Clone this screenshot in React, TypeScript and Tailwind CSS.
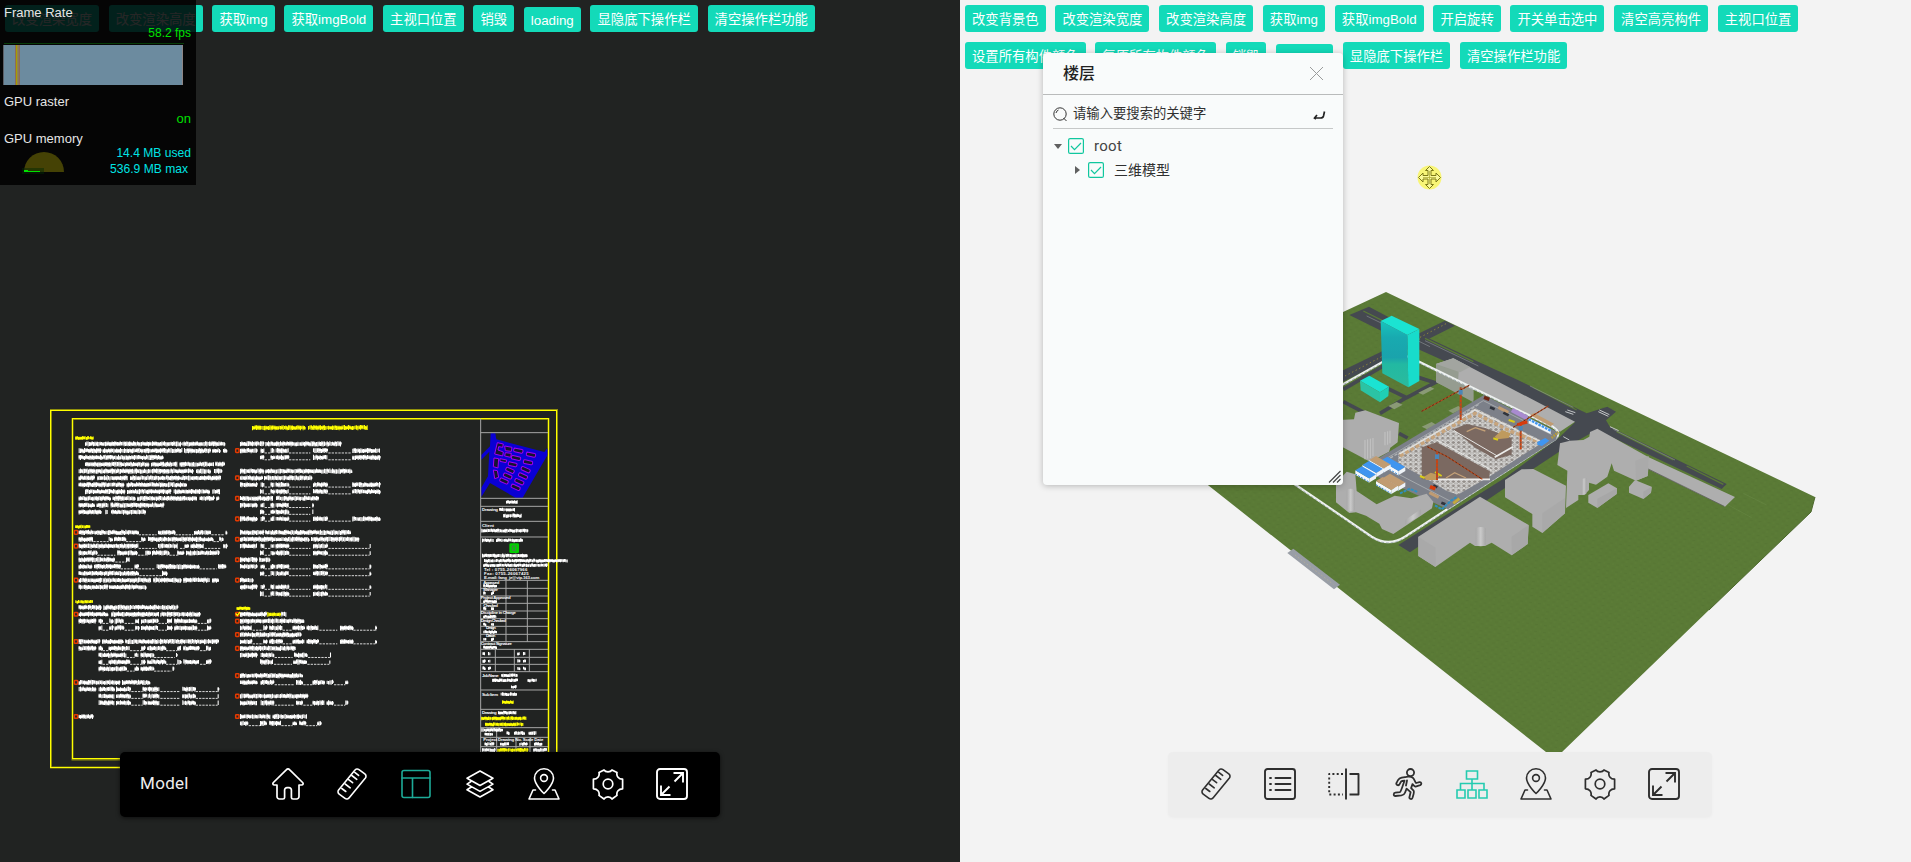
import React from 'react';

const CJK = "font-['Liberation_Sans','Noto_Sans_CJK_SC',sans-serif]";

type Item = { label: string; w: string; short?: boolean };

const leftActions: Item[] = [
  { label: '改变渲染宽度', w: 'w-[94px]' },
  { label: '改变渲染高度', w: 'w-[94px]' },
  { label: '获取img', w: 'w-[62.3px]' },
  { label: '获取imgBold', w: 'w-[89px]' },
  { label: '主视口位置', w: 'w-[80.7px]' },
  { label: '销毁', w: 'w-[40.7px]' },
  { label: 'loading', w: 'w-[57px]', short: true },
  { label: '显隐底下操作栏', w: 'w-[107.4px]' },
  { label: '清空操作栏功能', w: 'w-[107.4px]' },
];

const rightActions: Item[][] = [
  [
    { label: '改变背景色', w: 'w-[80.7px]' },
    { label: '改变渲染宽度', w: 'w-[94px]' },
    { label: '改变渲染高度', w: 'w-[94px]' },
    { label: '获取img', w: 'w-[62.3px]' },
    { label: '获取imgBold', w: 'w-[89px]' },
    { label: '开启旋转', w: 'w-[67.3px]' },
    { label: '开关单击选中', w: 'w-[94px]' },
    { label: '清空高亮构件', w: 'w-[94px]' },
    { label: '主视口位置', w: 'w-[80.7px]' },
  ],
  [
    { label: '设置所有构件颜色', w: 'w-[120.7px]' },
    { label: '复原所有构件颜色', w: 'w-[120.7px]' },
    { label: '销毁', w: 'w-[40.7px]' },
    { label: 'loading', w: 'w-[57px]', short: true },
    { label: '显隐底下操作栏', w: 'w-[107.4px]' },
    { label: '清空操作栏功能', w: 'w-[107.4px]' },
  ],
];

function ActionRow({ items }: { items: Item[] }) {
  return (
    <div className="flex h-[27px] items-end gap-[9.7px] whitespace-nowrap">
      {items.map((it) => (
        <button
          key={it.label}
          className={`${it.w} ${it.short ? 'h-[25px]' : 'h-[27px]'} flex shrink-0 items-center justify-center rounded-[3px] bg-[#13dab9] pt-[2px] text-[13.33px] leading-none text-white`}
        >
          {it.label}
        </button>
      ))}
    </div>
  );
}

/* ---------- performance overlay ---------- */

function Overlay() {
  return (
    <div className="absolute left-0 top-0 h-[185px] w-[196px] bg-black/85 font-['Liberation_Sans',sans-serif] text-[13px] leading-[15px] text-[#e6e6e6]">
      <div className="pl-1 pt-[5px]">Frame Rate</div>
      <div className="mt-[6px] pr-[5px] text-right text-[12px] leading-[14px] text-[#00e000]">58.2 fps</div>
      <svg className="mt-[2px] block" width="196" height="46" viewBox="0 42 196 46">
        <rect x="4" y="43" width="180" height="1" fill="#083d08" />
        <rect x="3" y="45" width="180" height="40" fill="#6c8b9f" />
        <rect x="3" y="45" width="1" height="40" fill="#5c5f66" />
        <rect x="182" y="45" width="1" height="40" fill="#8d8585" />
        <rect x="15" y="45" width="5" height="40" fill="#8a6b5c" />
        <rect x="16" y="45" width="1.4" height="40" fill="#a89c00" />
        <rect x="17.4" y="45" width="1" height="40" fill="#8a8a60" />
      </svg>
      <div className="mt-[6px] pl-1">GPU raster</div>
      <div className="mt-[2px] pr-[5px] text-right text-[#00e000]">on</div>
      <div className="mt-[5px] pl-1">GPU memory</div>
      <div className="flex justify-between">
        <svg className="ml-[22px] mt-[5px] block" width="42" height="24" viewBox="22 152 42 24">
          <path d="M24 173a20 20 0 0 1 40 0z" fill="#454205" />
          <rect x="22" y="169" width="22" height="6" fill="#032a03" fillOpacity=".5" />
          <path d="M24 171h4v1h12v1H24z" fill="#00e000" />
        </svg>
        <div className="-mt-px pr-[5px] text-right text-[12.1px] leading-[16px] text-[#00e4e4]">
          <div>14.4 MB used</div>
          <div className="pr-[3px]">536.9 MB max</div>
        </div>
      </div>
    </div>
  );
}

/* ---------- CAD sheet ---------- */

/* Row notation: "<row>|<x> t<width> u<width> s<width>" for lettering, blanks to fill in and gaps. */
const colA = [
  '0|135 t178 s3 t108 s3 t128',
  '1|116 t68 s4 t238 s6 t78 s7 t24 s8 t10',
  '2|116 t70 s4 t178',
  '3|135 t190 s8 t78 s8 t104 s3 t28',
  '4|116 t342 s10 t44 s10 t24',
  '5|116 t48 s8 t90 s8 t150 s4 t120',
  '6|116 t136 s8 t178',
  '7|135 t118 s8 t132 s8 t108 s8 t24',
  '8|116 t94 s8 t66 s8 t180 s7 t42 s8 t8',
  '9|116 t46 s8 t34 s8 t158',
  '10|116 t66 s14 t5 s12 t104',
  '13|116 t178 u56 s4 t50 u56 s2 t50 u42 s3 t2',
  '14|116 t42 u48 t12 s4 t34 u48 t12 s8 t194 u20 t10',
  '15|116 t178 u56 s4 t60 s4 u16 t10 s8 t40 u52 s6 t12',
  '16|116 t54 u56 s6 t60 u24 t16 s4 t50 u26 t18 s8 t100',
  '17|116 t108 u34 t12',
  '18|116 t40 s6 t78 u44 t10 u52 s4 t126 u54 s4 t22',
  '19|116 t180 u70 t16',
  '20|116 t70 s4 t142 s8 t84 s6 t78 s8 t18',
  '21|116 t88 s3 t112',
  '24|116 t66 s8 t222',
  '25|116 t88 s10 t144 s3 t118',
  '26|116 t50 s10 t10 u22 t10 s6 t28 u34 t12 s5 t50 u28 t16 s6 t68 u30 t10',
  '27|176 t10 u22 t10 s6 t28 u34 t12 s5 t50 u28 t16 s6 t68 u30 t10',
  '29|116 t64 s6 t62 s8 t278',
  '30|116 t50 s10 t10 u20 t62 u36 t12 s6 t54 u36 t12 s6 t48 u20 t16',
  '31|176 t82 u26 t10 s8 t38 u64 s4 t2',
  '32|176 t10 u20 t62 u36 t12 s6 t54 u36 t12 s6 t48 u20 t16',
  '33|176 t82 u26 t10 s8 t38 u54 s4 t2',
  '35|116 t122 s8 t82',
  '36|116 t50 s10 t46 s6 t44 u36 t12 s3 t36 u62 s6 t38 u68 t3',
  '37|176 t46 s6 t44 u36 t12 s3 t36 u62 s6 t38 u68 t3',
  '38|176 t46 s6 t44 u36 t12 s3 t36 u62 s6 t38 u68 t3',
  '40|116 t42',
];
const colB = [
  '0|30 t72 s4 t225',
  '1|30 t50 s12 t10 u20 t10 s5 t38 u66 s8 t44 u70 s4 t84',
  '2|90 t12 u20 t10 s5 t38 u66 s8 t44 u70 s4 t84',
  '4|30 t72 s4 t258',
  '5|30 t66 s6 t144',
  '6|30 t50 s12 t10 u20 t10 s5 t38 u66 s8 t44 u70 s4 t84',
  '7|90 t12 u20 t10 s5 t38 u66 s8 t44 u70 s4 t84',
  '8|30 t100 s8 t128',
  '9|30 t50 s12 t10 u20 t10 s5 t38 u66 s6 t3',
  '10|90 t12 u20 t10 s5 t38 u66 s6 t3',
  '11|30 t50 s12 t10 u20 t10 s5 t38 u66 s8 t44 u70 s4 t84',
  '13|30 t72 s4 t254',
  '14|30 t205 s8 t144',
  '15|30 t50 s12 t10 u20 t10 s5 t38 u66 s8 t44 u126 t3',
  '16|90 t12 u20 t10 s5 t38 u66 s8 t44 u126 t3',
  '17|30 t50 s8 t30',
  '18|30 t50 s12 t10 u20 t10 s5 t38 u66 s8 t44 u126 t3',
  '19|90 t12 u20 t10 s5 t38 u66 s8 t44 u126 t3',
  '20|30 t40',
  '21|30 t50 s12 t10 u20 t10 s5 t38 u66 s8 t44 u126 t3',
  '22|90 t12 u20 t10 s5 t38 u66 s8 t44 u126 t3',
  '25|30 t80 s44 t14',
  '26|30 t190',
  '27|30 t36 u34 t10 s8 t38 u32 t34 s8 t36 u56 s8 t38 u68 t3',
  '28|30 t182',
  '29|30 t36 u34 t10 s8 t38 u32 t34 s8 t36 u56 s8 t38 u68 t3',
  '30|30 t166',
  '31|30 t50 s12 t40 u56 s4 t40 u68 t3',
  '32|90 t40 u56 s4 t40 u68 t3',
  '34|30 t186',
  '35|30 t50 s12 t40 u60 s6 t20 u30 t36 s6 t20 u36 t8',
  '37|30 t204',
  '38|30 t50 s12 t40 u60 s6 t20 u30 t36 s6 t20 u36 t8',
  '40|30 t90 s8 t102',
  '41|30 t24 u36 t20 s8 t34 u36 t12 s8 t18 u36 t12',
];

const rand = (n: number) => {
  const v = Math.sin(n * 12.9898) * 43758.5453;
  return v - Math.floor(v);
};

function strokesFor(x: number, y: number, w: number, h = 16) {
  let d = '';
  let bar = '';
  for (let i = 0; i < w; i += 4) {
    const r = rand(x + i * 1.37 + y * 7);
    const top = r * h * 0.22;
    const bot = h - rand(x * 3 + i * 2.11 + y) * h * 0.2;
    d += `M${(x + i + 1.5).toFixed(1)} ${(y - h / 2 + top).toFixed(1)}V${(y - h / 2 + bot).toFixed(1)}`;
    if (rand(i * 5.3 + x + y) > 0.3) bar += `M${x + i} ${(y - 2 + r * 4).toFixed(1)}h5`;
  }
  return [d, bar];
}

function Lettering({ x, y, w, h, color = '#fff' }: { x: number; y: number; w: number; h?: number; color?: string }) {
  const [d, bar] = strokesFor(x, y, w, h);
  return (
    <g fill="none" stroke={color}>
      <path d={d} strokeWidth="3.2" />
      <path d={bar} strokeWidth="7" />
    </g>
  );
}

function Column({ rows }: { rows: string[] }) {
  let glyphs = '';
  let bars = '';
  let blanks = '';
  rows.forEach((row) => {
    const [k, rest] = row.split('|');
    const y = 131.5 + Number(k) * 20.45;
    const parts = rest.split(' ');
    let x = Number(parts[0]);
    parts.slice(1).forEach((p) => {
      const w = Number(p.slice(1));
      if (p[0] === 't') {
        const [a, b] = strokesFor(x, y, w);
        glyphs += a;
        bars += b;
      } else if (p[0] === 'u') {
        blanks += `M${x + 2} ${y + 7}h${w - 2}`;
      }
      x += w;
    });
  });
  return (
    <g fill="none" stroke="#fff">
      <path d={glyphs} strokeWidth="3.2" />
      <path d={bars} strokeWidth="7" />
      <path d={blanks} strokeWidth="3" strokeDasharray="7 3" stroke="#d8d8d8" />
    </g>
  );
}

function Markers({ x, rows }: { x: number; rows: number[] }) {
  return (
    <g fill="none" stroke="#e63a00" strokeWidth="4.5">
      {rows.map((k) => (
        <rect key={k} x={x + 1} y={126 + k * 20.45} width="10" height="11" rx="2" />
      ))}
    </g>
  );
}

const houses: [number, number, number, number][] = [
  [175, 152, 28, 11], [213, 164, 28, 11], [168, 174, 28, 11], [204, 187, 28, 11], [158, 193, 26, 11],
  [197, 209, 28, 11], [150, 211, 26, 11], [189, 228, 28, 11], [143, 228, 26, 11], [178, 245, 28, 11],
  [132, 243, 26, 11], [167, 262, 28, 11],
];

function TitleBlock() {
  return (
    <g transform="translate(460 400) scale(.33333)">
      <path d="M92 100h14l3 18 144 38 9-12v22l-74 127h-22l-76-44-26 42v-28l20-34 4-74-24 24v-14l26-26z" fill="#0a00d4" />
      <g fill="#141430" stroke="#a400f0" strokeWidth="3">
        {houses.map(([x, y, w, h]) => (
          <rect key={`${x}-${y}`} x={x - w / 2} y={y - h / 2} width={w} height={h} rx="4" transform={`rotate(${y > 200 ? 24 : 12} ${x} ${y})`} />
        ))}
        <path d="M112 128l18 4-2 10-12-2-2 10 16 6-2 12-24-6zM134 138l22 4-2 12-18-2zM136 158l18 2-2 12-18-4zM102 174l14 2-2 28-14-4zM120 176l20 4-2 8-18-4zM100 210l12 2 4 20-12 4z" />
      </g>
      <path d="M62 56V1060M62 98H264M62 295H264M62 319H264M62 364H264M62 411H264M62 541H264M62 565H264M62 588H264M62 610H264M62 633H264M62 656H264M62 679H264M62 703H264M62 725H264M62 748H264M62 772H264M62 793H264M62 815H264M62 870H264M62 928H264M62 983H264M62 1012H264M62 1040H264M138 541V725M202 541V725M106 748V815M163 748V815M208 748V815M110 983V1060M168 1012V1060M210 1012V1060" fill="none" stroke="#a8a8a8" strokeWidth="3" />
      <Lettering x={138} y={306} w={36} h={11} />
      <g fill="#fff" fontFamily="Liberation Sans, sans-serif" fontWeight="bold" fontSize="13">
        <text x="66" y="334" textLength="48">Drawing</text>
        <text x="66" y="380">Client</text>
        <text x="72" y="514" textLength="130">Tel : 0755-26067966</text>
        <text x="72" y="526" textLength="134">Fax: 0755-26067425</text>
        <text x="72" y="538" textLength="166">E-mail: fang_jz@vip.163.com</text>
        <text x="70" y="551" textLength="48">Approved</text>
        <text x="70" y="574" textLength="44">Manager</text>
        <text x="62" y="597" textLength="90">Project Approved</text>
        <text x="70" y="620" textLength="44">Checked</text>
        <text x="62" y="642" textLength="106">Discipline in Charge</text>
        <text x="62" y="665" textLength="76">Design Checked</text>
        <text x="78" y="688" textLength="30">Design</text>
        <text x="78" y="711" textLength="28">Drawn</text>
        <text x="62" y="735" textLength="94">Contract Signature</text>
        <text x="66" y="832" textLength="50">Job Name</text>
        <text x="66" y="888" textLength="48">Sub Item</text>
        <text x="66" y="943" textLength="44">Drawing</text>
        <text x="70" y="1023" textLength="180">Project Drawing No. Scale Date</text>
      </g>
      <Lettering x={118} y={329} w={48} h={11} />
      <Lettering x={130} y={347} w={56} h={13} />
      <Lettering x={64} y={392} w={140} h={12} />
      <Lettering x={66} y={421} w={34} h={11} />
      <Lettering x={108} y={421} w={80} h={11} />
      <rect x="148" y="430" width="29" height="29" rx="4" fill="#00d000" />
      <path d="M156 438h12l-2 14h-8z" fill="none" stroke="#4a7a4a" strokeWidth="3" />
      <Lettering x={66} y={467} w={136} h={12} />
      <Lettering x={72} y={482} w={252} h={11} />
      <Lettering x={70} y={496} w={190} h={10} />
      {[558, 580, 604, 626, 650, 673, 696, 718, 742].map((y, i) => (
        <g key={y}>
          <Lettering x={70} y={y} w={i % 2 ? 8 : 38} h={9} />
          {i % 2 ? <Lettering x={93} y={y} w={8} h={9} /> : null}
        </g>
      ))}
      {[761, 783, 805].map((y) => (
        <g key={y}>
          <Lettering x={68} y={y} w={8} h={11} />
          <Lettering x={84} y={y} w={8} h={11} />
          <Lettering x={172} y={y} w={8} h={11} />
          <Lettering x={189} y={y} w={8} h={11} />
        </g>
      ))}
      <Lettering x={124} y={826} w={46} h={11} />
      <Lettering x={97} y={841} w={74} h={11} />
      <Lettering x={203} y={841} w={28} h={10} />
      <Lettering x={153} y={861} w={14} h={10} />
      <Lettering x={122} y={883} w={48} h={11} />
      <Lettering x={126} y={906} w={34} h={11} color="#ff0" />
      <Lettering x={114} y={938} w={56} h={11} />
      <Lettering x={64} y={955} w={136} h={12} color="#ff0" />
      <Lettering x={75} y={973} w={114} h={12} color="#ff0" />
      <Lettering x={64} y={990} w={62} h={11} />
      <Lettering x={74} y={1003} w={22} h={9} />
      <Lettering x={140} y={999} w={8} h={12} />
      <Lettering x={162} y={999} w={32} h={12} />
      <Lettering x={206} y={999} w={24} h={12} />
      <Lettering x={74} y={1032} w={26} h={11} />
      <Lettering x={120} y={1032} w={28} h={11} />
      <Lettering x={178} y={1032} w={22} h={11} />
      <Lettering x={222} y={1032} w={24} h={11} />
      <Lettering x={66} y={1050} w={40} h={12} />
      <Lettering x={112} y={1050} w={90} h={12} color="#ff0" />
      <Lettering x={220} y={1050} w={40} h={12} />
    </g>
  );
}

function CadSheet() {
  return (
    <svg className="absolute inset-0" width="960" height="862" viewBox="0 0 960 862">
      <rect x="51" y="410" width="506" height="357.5" fill="none" stroke="#8f8f0c" strokeWidth="2" />
      <rect x="72.5" y="419" width="476" height="340.5" fill="none" stroke="#8f8f0c" strokeWidth="2" />
      <rect x="50.5" y="410.5" width="506" height="357" fill="none" stroke="#ff0" />
      <rect x="72.5" y="418.5" width="476" height="340" fill="none" stroke="#ff0" />
      <g transform="translate(40 400) scale(.33333)">
        <Column rows={colA} />
        <Markers x={102} rows={[13, 15, 20, 25, 29, 35, 40]} />
        <Lettering x={106} y={114} w={56} h={11} color="#ff0" />
        <Lettering x={106} y={380} w={42} h={11} color="#ff0" />
        <Lettering x={106} y={605} w={52} h={11} color="#ff0" />
      </g>
      <g transform="translate(230 400) scale(.33333)">
        <Column rows={colB} />
        <Markers x={16} rows={[1, 5, 8, 11, 14, 17, 20, 25, 26, 28, 30, 34, 37, 40]} />
        <Lettering x={66} y={83} w={160} h={16} color="#ff0" />
        <Lettering x={234} y={83} w={180} h={16} color="#ff0" />
        <Lettering x={20} y={625} w={38} h={11} color="#ff0" />
        <Lettering x={112} y={643} w={40} h={14} color="#ff0" />
        <path d="M17 640l5 6 8-10" fill="none" stroke="#ff0" strokeWidth="4" />
      </g>
      <TitleBlock />
    </svg>
  );
}

/* ---------- 3D site model ---------- */

function Crane({ x, top, base, jib }: { x: number; top: number; base: number; jib: string }) {
  return (
    <g fill="none">
      <path d={`M${x} ${top}V${base}`} stroke="#cf430f" strokeWidth="6" />
      <path d={`M${x} ${top}V${base}`} stroke="#7d5a4a" strokeWidth="3" strokeDasharray="5 6" />
      <path d={jib} stroke="#b8481c" strokeWidth="3.6" />
      <path d={jib} stroke="#5e2c18" strokeWidth="3" strokeDasharray="6 6" />
      <rect x={x - 6} y={top + 8} width="12" height="14" fill="#4a86b8" />
    </g>
  );
}

function Shed({ x, y, l, top = '#3f95f0' }: { x: number; y: number; l: number; top?: string }) {
  const h = l * 0.58;
  return (
    <g>
      <path d={`M${x} ${y}l${l} ${h}v13l-${l}-${h}z`} fill="#f4f8fc" />
      <path d={`M${x} ${y + 11}l${l} ${h}`} stroke="#2a7fd0" strokeWidth="3" strokeDasharray="6 4" />
      <path d={`M${x} ${y}l20-12 ${l} ${h}-20 12z`} fill={top} />
      <path d={`M${x + l} ${y + h}l20-12v12l-20 12z`} fill="#eef3f8" />
    </g>
  );
}

function SiteModel() {
  return (
    <svg className="absolute inset-0" width="951" height="862" viewBox="960 0 951 862">
      <defs>
        <pattern id="grass" width="9" height="7" patternUnits="userSpaceOnUse" patternTransform="rotate(8)">
          <rect width="9" height="7" fill="#5a7a36" />
          <path d="M1 2h3M5 5.500h3" stroke="#577634" strokeWidth="1" />
          <path d="M5 1h2M1 5h2" stroke="#5d7d38" strokeWidth="1" />
        </pattern>
        <pattern id="truss" width="16" height="13" patternUnits="userSpaceOnUse">
          <rect width="16" height="13" fill="#938e8a" />
          <path d="M0 0l16 13M16 0L0 13M0 0h16M8 0v13" stroke="#dcdcda" strokeWidth="2.600" />
        </pattern>
        <linearGradient id="glass" x1="0" y1="0" x2="0" y2="1">
          <stop offset="0" stopColor="#18c4bc" />
          <stop offset=".25" stopColor="#18aab0" />
          <stop offset=".55" stopColor="#1aa3ac" />
          <stop offset=".65" stopColor="#22b9a2" />
          <stop offset="1" stopColor="#2bbb9d" />
        </linearGradient>
        <linearGradient id="tube" x1="0" x2="1">
          <stop offset="0" stopColor="#a8a8a8" />
          <stop offset=".5" stopColor="#cacaca" />
          <stop offset="1" stopColor="#a6a6a6" />
        </linearGradient>
      </defs>
      <path d="M1386 292L1815 497l-4 15-102 98-147 142-8 7-8-7L1180 463v-75z" fill="url(#grass)" />
      <path d="M1815 497l-4 15-102 98" fill="none" stroke="#4c682d" />

      <g transform="translate(1320 280) scale(.33333)">
        {/* roads */}
        <g fill="#454950">
          <path d="M88 105l59-25L320 172 470 243 600 303 800 400l62-20 26 15-30 26 12 20L1220 612l-15 15L830 450 740 500 620 580 270 817l-35-22L560 590 720 470 765 427 600 345 300 210z" />
          <path d="M60 275L375 122l30 15L60 310z" />
        </g>
        <g fill="none" stroke="#454950" strokeWidth="11">
          <path d="M70 328l120-70 155 50-85 45-135-65M70 365l80 42M260 352l-80 48M237 460l26 14" />
        </g>
        <g fill="none" stroke="#5a7a36" strokeWidth="4">
          <path d="M130 93l170 85M315 175l145 70M640 322l130 68M890 455l170 85M1100 558l110 55" />
        </g>
        <g fill="none" stroke="#9ea3a6" strokeWidth="1.500">
          <path d="M140 108l190 92M315 182l160 76M630 318l130 64M880 448l185 92" />
          <path d="M736 395l24 8M742 390l24 8M835 395l30 14M838 390l30 14M730 470l18 10M870 440l26 12" stroke="#c4c7c9" strokeWidth="3" />
        </g>
        <path d="M75 288L250 196M300 172l80-42" stroke="#b5a82c" strokeWidth="2" strokeDasharray="4 8" />

        {/* slab along the main road */}
        <path d="M348 252l52-17 365 190-45 30-100-54-160-72v32L348 306z" fill="#aeaeae" />
        <path d="M348 252l52-17 18 12-4 60 46 24v36L348 306z" fill="#959c90" />
        <path d="M348 252l52-17 50 26-30 16z" fill="#a2a5a0" />
        <path d="M205 378l25-12 18 8-25 14zM295 338l36-18 12 6-34 18zM305 440l30-14 14 8-28 14zM385 392l30-14 14 8-30 14z" fill="#8a9a76" />

        {/* background buildings */}
        <path d="M60 420l42-2 4-20 30-7 101 38-4 58-22 16-4 12-57 30-90-48z" fill="#adadad" />
        <path d="M135 480v58M143 478v58M151 476v58M159 474v54M195 456v40M203 454v40M210 452v38" stroke="#c4c4c4" strokeWidth="3" />

        {/* perimeter wall */}
        <path d="M60 318L205 236q42-20 85 6L690 436q40 20 15 42L255 770q-50 32-100 0L-100 596" fill="none" stroke="#eef1f0" strokeWidth="7" />
        <path d="M60 320L205 239q42-20 85 6L690 439q40 20 15 42L255 773q-50 32-100 0L-100 599" fill="none" stroke="#7f8f96" strokeWidth="2" strokeDasharray="8 6" />

        {/* construction site */}
        <path d="M150 550L492 345l222 112-6 22L384 688 140 575z" fill="#7c8089" />
        <path d="M205 532L490 362l205 102M240 585l150 78" fill="none" stroke="#a5a9ad" strokeWidth="3" />
        <path d="M185 550L478 372" stroke="#b0b3b6" strokeWidth="4" strokeDasharray="10 5" />
        <path d="M235 520l230-136 196 96-4 14-152 98-92 52-34-12-60-36-84-46z" fill="url(#truss)" />
        <path d="M240 528L465 400l110 55 80 30" fill="none" stroke="#c7a47c" strokeWidth="10" strokeDasharray="12 6" />
        <path d="M240 521L465 390l195 94" fill="none" stroke="#e0e0dd" strokeWidth="4" />
        <path d="M400 448l40-16 55 12 80 30v50l-48 14-60-34z" fill="#7b6961" />
        <path d="M305 502l45-15 160 87-3 24H305z" fill="#7b6961" />
        <path d="M350 480l165 90M402 452l130 76" fill="none" stroke="#e6e6e4" strokeWidth="3" />
        <path d="M524 532l55-32M340 598h170" stroke="#ececea" strokeWidth="5" />
        <path d="M378 594l26-16 34 16M440 455l26-12 30 10" fill="none" stroke="#c3a077" strokeWidth="4" />
        <path d="M312 590l20-12 28 8-12 14h-30zM524 470l22-20 26 10-6 14-34 4z" fill="#bf9a5d" />
        <path d="M300 588l14 6M345 576l20 12M566 420l18 6M520 475l14 4" stroke="#d8cc18" strokeWidth="6" />
        <path d="M535 382l30 15M328 638l28 14" stroke="#c09b72" strokeWidth="9" />
        <path d="M510 382l14 6M550 398l16 8M340 616l12 6M364 668l12 5" stroke="#30343c" strokeWidth="8" />
        <path d="M492 352l16 6M205 545l16 6" stroke="#6e2614" strokeWidth="10" />
        <path d="M330 620l16 6" stroke="#d63c0c" strokeWidth="11" />
        <path d="M576 390l46 24" stroke="#a98bd0" strokeWidth="14" />

        {/* sheds */}
        <path d="M626 414l66 34v14l-66-32z" fill="#f2f6fa" />
        <path d="M626 418l66 34" stroke="#3f95f0" strokeWidth="7" strokeDasharray="8 3" />
        <path d="M630 405l12-6 60 32-10 8z" fill="#c19c72" />
        <path d="M652 486l24-12 12 8-22 16-14-4z" fill="#3f95f0" />
        <path d="M695 474l20-18" stroke="#b59b3a" strokeWidth="8" strokeDasharray="5 3" />
        <Shed x={182} y={542} l={54} />
        <Shed x={148} y={540} l={44} top="#c19c72" />
        <Shed x={127} y={555} l={42} />
        <Shed x={106} y={571} l={42} />
        <Shed x={190} y={593} l={46} top="#c19c72" />
        <Shed x={168} y={603} l={46} top="#c19c72" />
        <path d="M240 640l30-14 22 10M345 676l20 12 28-26 18-12" fill="none" stroke="#2f8fc0" strokeWidth="6" strokeDasharray="9 3" />
        <path d="M400 670l18-14" stroke="#c4a83c" strokeWidth="8" />

        <Crane x={422} top={322} base={420} jib="M305 394L448 316" />
        <Crane x={351} top={515} base={600} jib="M322 500l60 30 105 68" />
        <Crane x={602} top={430} base={508} jib="M580 442l105-64" />
        <path d="M592 434l30-8" stroke="#d83a0c" strokeWidth="9" />

        {/* highlighted buildings */}
        <path d="M182 123l80 42 3 157-78-42z" fill="url(#glass)" />
        <path d="M182 123l33-16 83 40-36 18z" fill="#1be3d2" />
        <path d="M262 165l36-18v156l-33 19z" fill="#18dccb" />
        <path d="M120 302l28-15 59 33-27 17z" fill="#1be3d2" />
        <path d="M120 302l60 35v30l-58-36z" fill="#2bc3a4" />
        <path d="M180 337l27-17-2 28-25 19z" fill="#1fcfb6" />
      </g>

      <g transform="translate(1180 440) scale(.33333)" fill="#aeaeae">
        <path d="M468 130l32-35 26 8 4 50 60 40 54-26 50 8 46-14 20 24-4 20-30 20-86 57-34-15-8-16-40-24-30-10-20 2-40-32z" />
        <path d="M500 150q12-8 24 0v60q-12 8-24 2z" fill="url(#tube)" />
        <path d="M676 240l46-32v18l-46 28z" fill="url(#tube)" />
        <path d="M715 290l185-120 146 85-3 57-48 34-60-38-20 10h-30l-15-10-104 73-51-33z" />
        <path d="M715 290l52 33v58l-52-33z" fill="#a9a9a9" />
        <path d="M995 290l51-35-3 57-48 34z" fill="#a8a8a8" />
        <path d="M887 264q15-6 30 0v52q-15 6-30 0z" fill="url(#tube)" />
        <path d="M322 339l18-13 140 108-18 14z" fill="#999ea6" />
        <path d="M345 345l115 88" stroke="#c9b98c" strokeWidth="1.500" strokeDasharray="5 6" />
      </g>

      <g transform="translate(1520 350) scale(.33333)" fill="#aeaeae">
        <path d="M-45 390l50-32 35-1 98 50-3 83-68 59-30-19v-38l-82-50z" />
        <path d="M67 490l68-46v46l-68 59z" fill="#a9a9a9" />
        <path d="M112 345l8-65 30-8 40-2 18-10 2-14 22-10 154 86 259 119-30 29-230-112-2 20-35 14-66-30-7-22-13 40-34 24-21-6v22l-14 15h-18v15l-37 24 4-112z" />
        <path d="M385 357l228 112" stroke="#555" strokeWidth="2" />
        <path d="M348 392l-2-60 40-14-3 60z" fill="#aaa" />
        <path d="M187 386l12-2v48l-14 3z" fill="url(#tube)" />
        <path d="M205 435l60-35 26 15-1 17-58 42-27-16z" />
        <path d="M327 410l18-20 50 20-2 18-23 19-43-19z" />
        <path d="M232 446l59-31-1 17-58 42zM370 425l25-15-2 18-23 19z" fill="#a7a7a7" />
        <path d="M670 430l70 35M625 465l70 38" stroke="#6a8a46" strokeWidth="1.500" />
      </g>
    </svg>
  );
}

/* ---------- toolbar icons ---------- */

function Icon({ children, color, sw = 2 }: { children: React.ReactNode; color: string; sw?: number }) {
  return (
    <svg width="32" height="32" viewBox="0 0 32 32" fill="none" stroke={color} strokeWidth={sw} strokeLinecap="round" strokeLinejoin="round" className="shrink-0">
      {children}
    </svg>
  );
}

const homePath = <path d="M14.5 1.6a2 2 0 0 1 3 0L30.6 14.5c1 1 .5 2.5-1 2.5H27v11.5a2.4 2.4 0 0 1-2.4 2.5H21a1.6 1.6 0 0 1-1.6-1.6V22a2.4 2.4 0 0 0-2.4-2.4h-2a2.4 2.4 0 0 0-2.4 2.4v7.4A1.6 1.6 0 0 1 11 31H7.4A2.4 2.4 0 0 1 5 28.5V17H2.4c-1.500 0-2-1.500-1-2.500z" />;
const rulerPath = (
  <>
    <path d="M18.800 2.200a3 3 0 0 1 4.200-.6l5.800 4.300a3 3 0 0 1 .6 4.200L13.200 29.800a3 3 0 0 1-4.200.6l-5.800-4.300a3 3 0 0 1-.6-4.200z" />
    <path d="M5.800 20.500l4 3M9.200 16l5 3.800M12.600 11.700l4 3M15.800 7.500l5 3.800M18.800 4.400l3.800 3" />
  </>
);
const layoutPath = (
  <>
    <rect x="2" y="2.500" width="28" height="27" rx="2" />
    <path d="M2 10h28M12.500 10v19.500" />
  </>
);
const layersPath = (
  <>
    <path d="M16 3l13 7.200-13 7.300-13-7.300z" />
    <path d="M7 13.500l-4 2.600 13 7.300 13-7.300-4-2.600M7 19.300L3 21.800 16 29l13-7.200-4-2.500" />
  </>
);
const pinPath = (
  <>
    <path d="M16 25.500S6.500 16.500 6.500 10a9.500 9.200 0 0 1 19 0C25.500 16.500 16 25.500 16 25.500z" />
    <circle cx="16" cy="10" r="3.400" />
    <path d="M7.500 22H5L1 31h30l-4-9h-2.500" />
  </>
);
const gearPath = (
  <>
    <path d="M12 2c1.600 2.400 6.400 2.400 8 0l5 2.600c-.8 3.200 1.600 6.800 5.600 6.600v9.600c-4-.2-6.400 3.400-5.600 6.600L20 31c-1.600-2.800-6.400-2.800-8 0l-5-3.600c.8-3.200-1.600-6.800-5.600-6.600v-9.600C5.400 11.400 7.800 7.800 7 4.600z" />
    <circle cx="16" cy="16" r="4.800" />
  </>
);
const expandPath = (
  <>
    <rect x="1" y="1" width="30" height="30" rx="3" />
    <path d="M18.500 13.500L27 5M17.500 5H27v9.500M13.500 18.500L5 27M5 17.500V27h9.500" strokeLinecap="butt" strokeLinejoin="miter" />
  </>
);
const listPath = (
  <>
    <rect x="1" y="1" width="30" height="30" rx="2.500" />
    <path d="M11.500 10h15M11.500 16h15M11.500 22h15" />
    <path d="M6 10h1M6 16h1M6 22h1" />
  </>
);
const splitPath = (
  <>
    <path d="M18 .5v31" strokeLinecap="butt" />
    <path d="M21.500 6H30.500v20.500H21.500" strokeLinecap="butt" />
    <path d="M15 6H1.200v20.500H15" strokeDasharray="2 2.300" strokeLinecap="butt" />
  </>
);
const runPath = (
  <>
    <circle cx="18.500" cy="4.600" r="3.600" />
    <path d="M13 9.200c2-1 6-.7 7.800.5 1.600 1.200 2 4 3.400 5.300l3.300-.9c2-.4 2.400 2.300.8 3l-4.800 1.500c-1.200 0-2.300-1.500-3-2.500l-1.400 4 2.500 2.600c1 1.500-.5 5-1.200 7.300-.6 1.700-3.400 1.200-3-.8l1.200-5-4-3.600-1.600 4.200c-.7 1.800-2 2.400-3.600 2.600l-6 .6c-2.200 0-2.200-3 0-3.300l4.600-.6c1-.6 3.500-8.600 4.500-11.500-1.700 0-2.600 0-3.200.7l-2 3.300c-1.300 1.500-3.600 0-2.800-1.600C6.200 10.500 8 9.500 13 9.200zM15 12.500l-1 5" />
  </>
);
const treePath = (
  <path d="M10.500 3h11v8h-11zM1 22h8v8H1zM12 22h8v8h-8zM23 22h8v8h-8zM16 11v11M4.500 22v-6.500h23.500V22" strokeLinecap="butt" strokeLinejoin="miter" />
);

function LeftToolbar() {
  return (
    <div className="absolute left-[120px] top-[752px] flex h-[65px] w-[600px] items-center rounded-[5px] bg-black pb-[2px] pl-5 shadow-[0_1px_4px_rgba(0,0,0,0.6)]">
      <div className="w-[132px] font-['Roboto',sans-serif] text-[17px] tracking-[0.3px] text-[#eee]">Model</div>
      <div className="flex gap-8">
        <Icon color="#fff" sw={1.7}>{homePath}</Icon>
        <Icon color="#fff" sw={1.6}>{rulerPath}</Icon>
        <Icon color="#1dab98" sw={1.6}>{layoutPath}</Icon>
        <Icon color="#fff" sw={1.6}>{layersPath}</Icon>
        <Icon color="#fff" sw={1.6}>{pinPath}</Icon>
        <Icon color="#fff" sw={1.700}>{gearPath}</Icon>
        <Icon color="#fff" sw={1.900}>{expandPath}</Icon>
      </div>
    </div>
  );
}

function RightToolbar() {
  return (
    <div className="absolute left-[208px] top-[752px] flex h-[65px] w-[544px] items-center justify-center gap-8 rounded-[5px] bg-[#ededed] pb-[2px] shadow-[0_1px_3px_rgba(0,0,0,0.03)]">
      <Icon color="#2e2e2e" sw={1.6}>{rulerPath}</Icon>
      <Icon color="#2e2e2e" sw={1.900}>{listPath}</Icon>
      <Icon color="#2e2e2e" sw={1.900}>{splitPath}</Icon>
      <Icon color="#2e2e2e" sw={1.800}>{runPath}</Icon>
      <Icon color="#25cbb0" sw={1.6}>{treePath}</Icon>
      <Icon color="#2e2e2e" sw={1.6}>{pinPath}</Icon>
      <Icon color="#2e2e2e" sw={1.700}>{gearPath}</Icon>
      <Icon color="#2e2e2e" sw={1.900}>{expandPath}</Icon>
    </div>
  );
}

/* ---------- floor dialog ---------- */

function Checkbox() {
  return (
    <svg width="16" height="16" viewBox="0 0 16 16" fill="none" stroke="#10c79e" strokeWidth="1.200" className="shrink-0">
      <rect x=".6" y=".6" width="14.800" height="14.800" rx="1.500" />
      <path d="M3 8l3.500 3.600L13 5" />
    </svg>
  );
}

function FloorDialog() {
  return (
    <div className="absolute left-[83px] top-[53px] h-[432px] w-[300px] rounded-[4px] bg-[#f9fbfb] text-[#303030] shadow-[0_1px_6px_rgba(0,0,0,0.25)]">
      <div className="flex h-[42px] items-center justify-between border-b border-[#b9bbbb] pl-5 pr-[19px] text-[16px] font-medium text-[#222]">
        <span className="pt-px">楼层</span>
        <svg width="15" height="15" viewBox="0 0 15 15" stroke="#9a9c9c" fill="none">
          <path d="M1 1l13 13M14 1L1 14" />
        </svg>
      </div>
      <div className="mx-[10px] flex h-[34px] items-center border-b border-[#c6c8c8] pt-[5px] text-[13.33px]">
        <svg width="15" height="15" viewBox="0 0 15 15" fill="none" stroke="#333" className="shrink-0">
          <circle cx="7" cy="7" r="6.200" />
          <path d="M10.500 11l3 3M3 6a4 4 0 0 1 2.500-3" />
        </svg>
        <span className="ml-[5px] grow leading-none">请输入要搜索的关键字</span>
        <svg width="13" height="9" viewBox="0 0 13 9" fill="none" stroke="#222" strokeWidth="1.700" className="mr-[7px] mt-[2px]">
          <path d="M11.500.5L10.500 5Q10 7 7.500 7H1.500M4 4L1.500 7l1.500 1" />
        </svg>
      </div>
      <div className="mt-[5px]">
        <div className="flex h-6 items-center pl-[11px]">
          <svg width="8" height="5" viewBox="0 0 8 5" className="mr-[6px]">
            <path d="M0 0h8L4 5z" fill="#606060" />
          </svg>
          <Checkbox />
          <span className="ml-[10px] font-['Roboto',sans-serif] text-[15px] leading-none tracking-[0.3px] text-[#444]">root</span>
        </div>
        <div className="flex h-6 items-center pl-[32px]">
          <svg width="5" height="8" viewBox="0 0 5 8" className="mr-[8px]">
            <path d="M0 0v8l5-4z" fill="#606060" />
          </svg>
          <Checkbox />
          <span className="ml-[10px] text-[14px] leading-none">三维模型</span>
        </div>
      </div>
      <svg className="absolute bottom-[1px] right-[1px]" width="14" height="14" viewBox="0 0 14 14" stroke="#444" strokeWidth="1.200" fill="none">
        <path d="M1 12.500L12.500 1M5 12.500L12.500 5M9 12.500L12.500 9" />
      </svg>
    </div>
  );
}

function MoveCursor() {
  return (
    <svg className="absolute left-[457px] top-[165px]" width="25" height="25" viewBox="0 0 25 25">
      <circle cx="12.500" cy="12.500" r="12" fill="#f8f577" />
      <path d="M12.500 1.500l4 4h-2.500v5h5V8l4.500 4.500-4.500 4.500v-3h-5v5.500h2.500l-4 4-4-4h2.500V14H6v3l-4.500-4.500L6 8v2.500h5v-5H8.500z" fill="#fbfa9a" stroke="#7d7a16" />
      <path d="M12.500 6v13M6 12.500h13" stroke="#b5b23c" strokeWidth=".8" />
    </svg>
  );
}

export default function App() {
  return (
    <div className={`flex h-[862px] w-[1911px] overflow-hidden ${CJK}`}>
      <section className="relative w-[960px] shrink-0 overflow-hidden bg-[#212322]">
        <CadSheet />
        <div className="relative pl-[5px] pt-[5px]">
          <ActionRow items={leftActions} />
        </div>
        <Overlay />
        <LeftToolbar />
      </section>
      <section className="relative w-[951px] shrink-0 overflow-hidden bg-[#f3f3f3]">
        <SiteModel />
        <div className="relative flex flex-col gap-[10px] pl-[5px] pt-[5px]">
          {rightActions.map((row, i) => (
            <ActionRow key={i} items={row} />
          ))}
        </div>
        <FloorDialog />
        <MoveCursor />
        <RightToolbar />
      </section>
    </div>
  );
}
